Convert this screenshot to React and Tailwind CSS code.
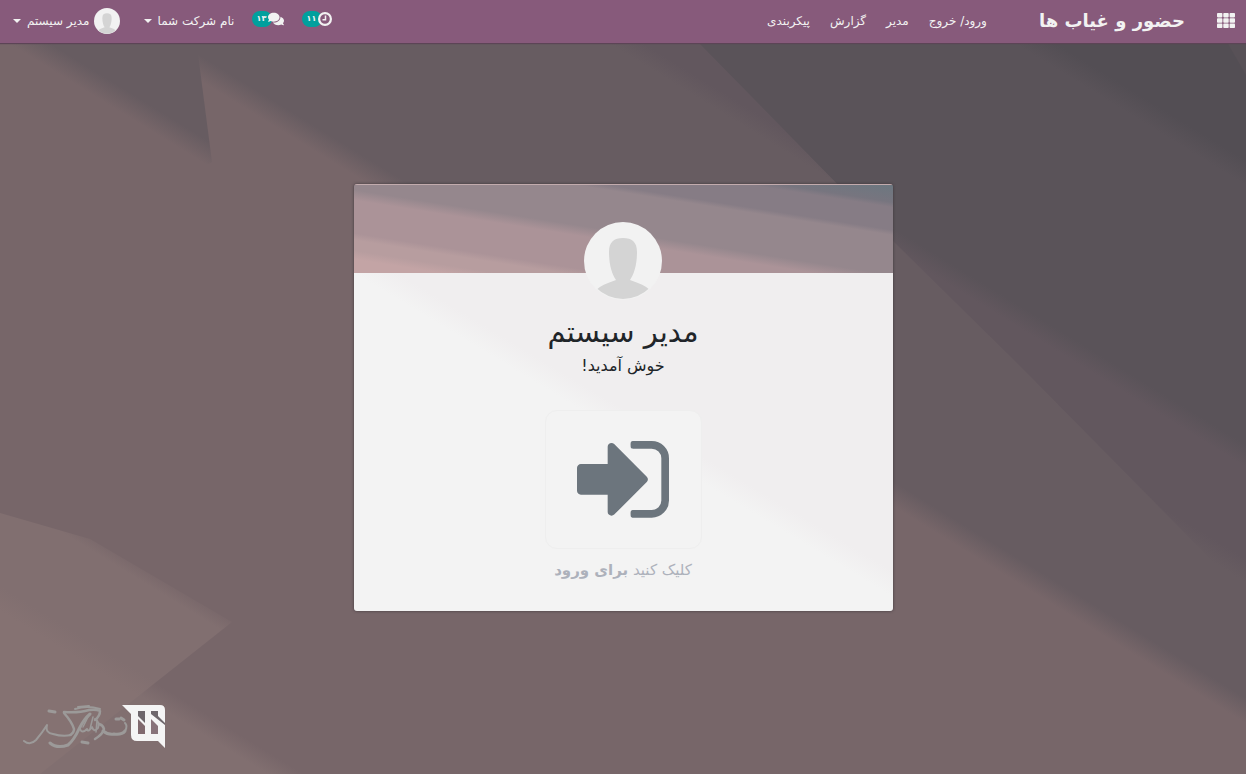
import { FaComments } from "react-icons/fa";

const menuItems = ["ورود/ خروج", "مدیر", "گزارش", "پیکربندی"];

function AppsIcon() {
  return (
    <svg viewBox="0 0 18 15" className="w-[18px]" fill="currentColor" aria-hidden="true">
      {[0, 5.3, 10.6].map((y) =>
        [0, 6.3, 12.6].map((x) => <rect key={`${x}-${y}`} x={x} y={y} width="5.400" height="4.400" rx="0.8" />)
      )}
    </svg>
  );
}

function Avatar({ className }) {
  return (
    <svg viewBox="0 0 78 78" className={className} aria-hidden="true">
      <defs>
        <clipPath id="avatarClip">
          <circle cx="39" cy="39" r="38" />
        </clipPath>
      </defs>
      <circle cx="39" cy="39" r="39" fill="#f2f2f2" />
      <g fill="#d4d4d4" clipPath="url(#avatarClip)">
        <path d="M25 30C25 20 30 16 39 16S53 20 53 30C53 43 50 52 46 58L54 61C60 63 64 66 68 70L60 76Q39 82 18 76L10 70C14 66 18 63 24 61L32 58C28 52 25 43 25 30Z" />
      </g>
    </svg>
  );
}

function ClockIcon() {
  return (
    <svg viewBox="0 0 14 14" className="relative z-10 size-[14px]" fill="none" stroke="currentColor" aria-hidden="true">
      <circle cx="7" cy="7" r="5.900" fill="#875a7b" strokeWidth="2.200" />
      <path d="M7.500 3.500V7.800H4.500" strokeWidth="1.500" />
    </svg>
  );
}

function Caret() {
  return (
    <svg viewBox="0 0 8 4" className="w-2 h-1" fill="currentColor" aria-hidden="true">
      <path d="M0 0H8L4 4Z" />
    </svg>
  );
}

function SignInIcon() {
  return (
    <svg viewBox="0 0 1536 1280" className="w-[92px]" fill="currentColor" aria-hidden="true">
      <g transform="translate(0 -256)">
        <path d="M1184 896q0 26-19 45l-544 544q-19 19-45 19t-45-19-19-45v-288h-448q-26 0-45-19t-19-45v-384q0-26 19-45t45-19h448v-288q0-26 19-45t45-19 45 19l544 544q19 19 19 45zm352-352v704q0 119-84.500 203.500t-203.500 84.500h-320q-13 0-22.500-9.500t-9.500-22.500q0-4-1-20t-.5-26.500 3-23.500 10-19.500 20.500-6.500h320q66 0 113-47t47-113v-704q0-66-47-113t-113-47h-312l-11.500-1-11.500-3-8-5.500-7-9-2-13.500q0-4-1-20t-.5-26.500 3-23.500 10-19.500 20.500-6.500h320q119 0 203.500 84.500t84.500 203.500z" />
      </g>
    </svg>
  );
}

function Badge({ children }) {
  return (
    <span className="flex items-center justify-center h-4 min-w-[20px] -ms-1 rounded-full bg-[#00a09d] ps-[5px] pe-[3px] text-[8px] font-bold leading-none">
      {children}
    </span>
  );
}

// All gradients share the same diagonal axis
function Axis({ id, stops }) {
  return (
    <linearGradient id={id} gradientUnits="userSpaceOnUse" x1="-314" y1="511" x2="314" y2="-511">
      {stops.map(([offset, color], i) => (
        <stop key={i} offset={offset} stopColor={color} />
      ))}
    </linearGradient>
  );
}

function Backdrop() {
  return (
    <svg
      viewBox="0 0 1246 774"
      preserveAspectRatio="none"
      className="absolute inset-0 w-full h-full"
      aria-hidden="true"
    >
      <defs>
        <Axis
          id="base"
          stops={[
            [0.067, "#816f70"],
            [0.083, "#776669"],
            [0.53, "#776669"],
            [0.548, "#675c61"],
            [0.735, "#675c61"],
            [0.75, "#62575e"],
          ]}
        />
        <Axis id="left" stops={[[0.473, "#776669"], [0.491, "#675c61"]]} />
        <Axis
          id="dark"
          stops={[
            [0.63, "#675c61"],
            [0.647, "#62575e"],
            [0.712, "#62575e"],
            [0.728, "#5a5359"],
            [0.912, "#5a5359"],
            [0.93, "#534e54"],
          ]}
        />
        <Axis
          id="corner"
          stops={[
            [0.066, "#857272"],
            [0.084, "#816f70"],
            [0.149, "#816f70"],
            [0.163, "#776669"],
          ]}
        />
      </defs>
      <rect width="1246" height="774" fill="url(#base)" />
      <path d="M0 0H191L212 162L0 300Z" fill="url(#left)" />
      <path d="M657 0L700 44L895 243L1024 370L1246 595V0Z" fill="url(#dark)" />
      <path d="M1228 44L1246 75V0H1203Z" fill="#585157" />
      <path d="M0 513L90 539L232 622L40 774H0Z" fill="url(#corner)" />
    </svg>
  );
}

function BrandLogo() {
  return (
    <svg viewBox="0 0 142 48" className="w-[142px]" role="img" aria-label="تسهیل گستر">
      <g fill="none" stroke="#9c9a99" strokeLinecap="round" strokeLinejoin="round">
        <path strokeWidth="2" d="M1 39Q7 44 13 38Q19 31 24 23Q22 31 30 32Q40 35 48 33" />
        <path strokeWidth="2.500" d="M41 11Q49 20 51 27Q51 31 47 33" />
        <path strokeWidth="3" d="M27 41Q34 47 45 43Q51 38 56 27Q61 17 67 12" />
        <path strokeWidth="2.500" d="M41 10Q56 11 66 8Q73 7 77 9Q77 14 72 18" />
        <path strokeWidth="2" d="M52 7Q64 3 77 7M55 5L66 4" />
        <path strokeWidth="2" d="M57 27Q59 32 64 27Q65 31 69 25Q71 31 75 26Q77 20 72 17" />
        <path strokeWidth="2.500" d="M72 37Q80 32 81 27Q80 23 76 22" />
        <path strokeWidth="3" d="M80 29Q85 33 91 32Q99 33 102 29" />
        <path strokeWidth="2" d="M102 29Q105 24 102 21" />
        <path strokeWidth="3" d="M26 9L32 10M93 17L96 17M98 16L101 18M59 40L65 41" />
        <path strokeWidth="1.500" d="M66 13L60 25M70 15L67 27M74 18L73 30" />
      </g>
      <path d="M99 3H137Q142 3 142 8V46L135 39H114Q108 39 108 33V12Z" fill="#f4f4f4" />
      <g fill="#6d666b">
        <path d="M115 9H122V21L115 14Z" />
        <path d="M115 17L122 24V32H115Z" fill="#80696e" />
        <path d="M128 9H135V14L142 21V23L128 12Z" />
        <path d="M128 17L135 24V32H128Z" fill="#88737a" />
      </g>
    </svg>
  );
}

export default function App() {
  return (
    <div
      dir="rtl"
      lang="fa"
      className="relative flex flex-col min-h-screen bg-[#776669] font-['DejaVu_Sans',sans-serif]"
    >
      <Backdrop />

      <header className="relative z-10 flex items-center h-[43px] pr-[11px] pl-[13px] bg-[#875a7b] text-[#f2f2f2] text-[12px] shadow-[0_1px_1px_#5c4456]">
        <button type="button" aria-label="برنامه ها" className="pb-[2px]">
          <AppsIcon />
        </button>
        <a href="#home" className="ms-8 pb-[2px] text-[18px] font-bold">
          حضور و غیاب ها
        </a>
        <nav className="flex gap-5 ms-[52px] pb-[2px]">
          {menuItems.map((item) => (
            <a key={item} href="#menu">
              {item}
            </a>
          ))}
        </nav>

        {/* Systray */}
        <div className="flex items-center ms-auto pb-[2px]">
          <button type="button" aria-label="فعالیت ها" className="flex items-center pb-[3px]">
            <ClockIcon />
            <Badge>۱۱</Badge>
          </button>
          <button type="button" aria-label="گفتگوها" className="flex items-center ms-[18px] pb-[3px]">
            <FaComments className="relative z-10 size-4" />
            <Badge>۱۳</Badge>
          </button>
          <button type="button" className="flex items-center gap-[6px] ms-[18px]">
            نام شرکت شما
            <Caret />
          </button>
          <button type="button" className="flex items-center ms-6">
            <Avatar className="size-[26px]" />
            <span className="ms-1 me-[6px]">مدیر سیستم</span>
            <Caret />
          </button>
        </div>
      </header>

      <main className="relative flex flex-col items-center justify-center flex-1 pb-[22px]">
        {/* Attendance card */}
        <section className="w-full max-w-[539px] overflow-hidden rounded-[3px] text-center text-[#212529] shadow-[0_0_3px_#3d363b]">
          <div className="h-[89px] border-t border-[#c2abad] bg-[linear-gradient(9deg,#c3a4a5_8%,#b79d9f_13%,#b79d9f_19%,#ab9398_23%,#ab9398_42%,#95878d_48%,#95878d_71%,#867c85_74%,#867c85_87%,#77757f_90%,#6c7780_100%)]" />
          <div className="flex flex-col items-center pb-7 bg-[linear-gradient(31deg,#f3f3f3_51%,#f0eeef_55%)]">
            <Avatar className="size-[78px] -mt-[51px]" />
            <h1 className="mt-3 text-[29px] leading-10">مدیر سیستم</h1>
            <p className="text-[16px] leading-7">خوش آمدید!</p>
            <button
              type="button"
              aria-labelledby="signInLabel"
              className="flex items-center justify-center w-[157px] h-[139px] mt-[30px] rounded-xl border border-[#eeeeee] bg-[#f3f3f3] text-[#6c757d]"
            >
              <SignInIcon />
            </button>
            <p id="signInLabel" className="mt-2 text-[15px] leading-[26px] text-[#adb1bb]">
              کلیک کنید <b>برای ورود</b>
            </p>
          </div>
        </section>

        <div className="absolute left-[23px] bottom-6">
          <BrandLogo />
        </div>
      </main>
    </div>
  );
}
